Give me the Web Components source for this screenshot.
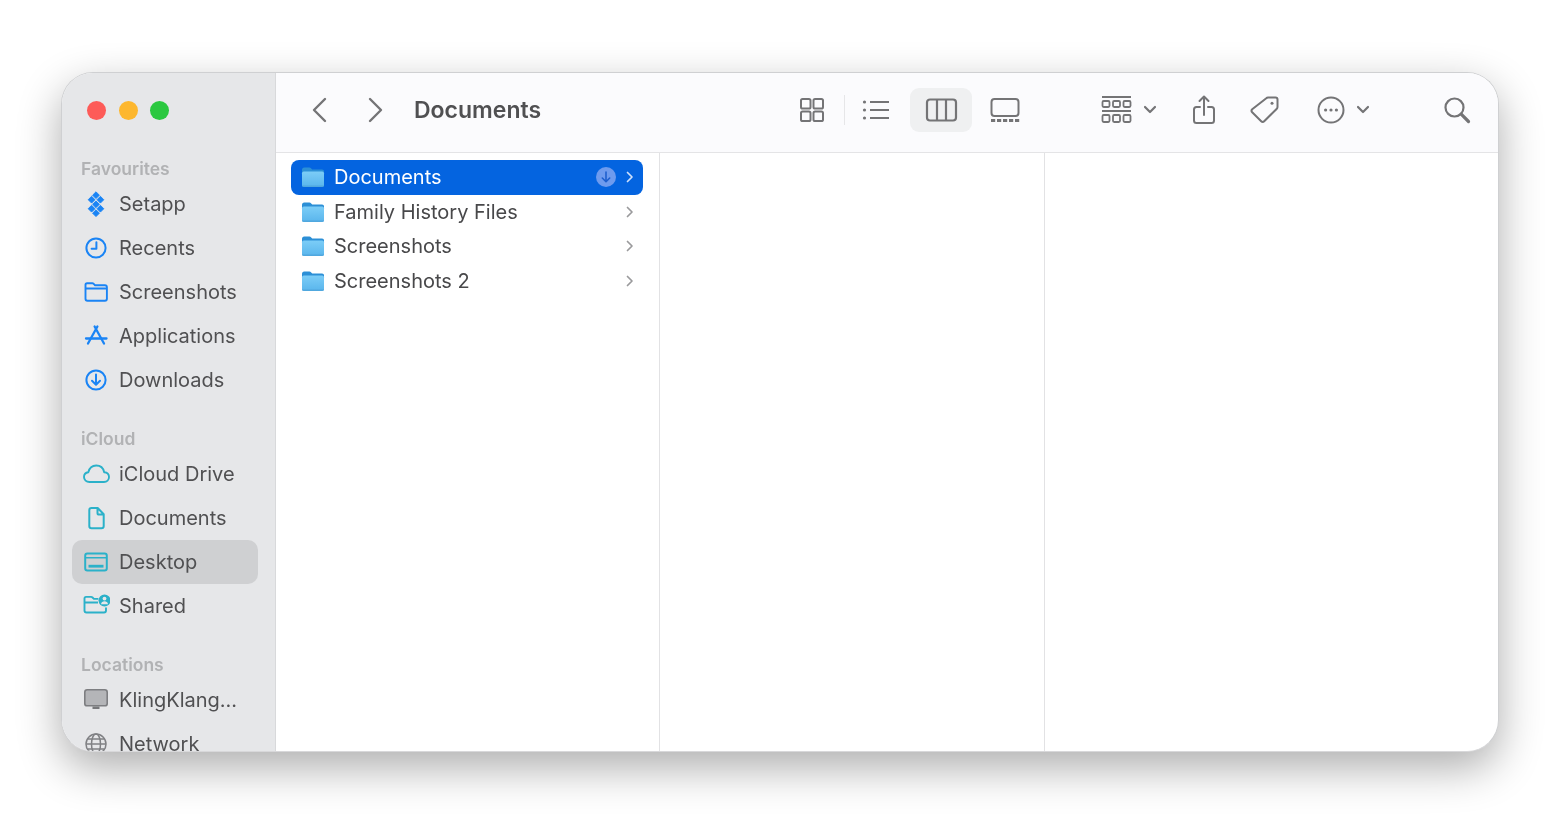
<!DOCTYPE html>
<html>
<head>
<meta charset="utf-8">
<title>Documents</title>
<style>
  html, body { margin: 0; background: #fff; }
  body { padding: 72px 61px 0; min-height: 832px; box-sizing: border-box; font-family: Inter, "Liberation Sans", sans-serif; }
</style>
</head>
<body>
<finder-window>
  <side-bar slot="side">
    <side-group label="Favourites">
      <side-item icon="setapp">Setapp</side-item>
      <side-item icon="clock">Recents</side-item>
      <side-item icon="folder">Screenshots</side-item>
      <side-item icon="apps">Applications</side-item>
      <side-item icon="download">Downloads</side-item>
    </side-group>
    <side-group label="iCloud" color="#2bb1c9">
      <side-item icon="cloud">iCloud Drive</side-item>
      <side-item icon="doc">Documents</side-item>
      <side-item icon="desktop" selected>Desktop</side-item>
      <side-item icon="shared">Shared</side-item>
    </side-group>
    <side-group label="Locations" color="#808184">
      <side-item icon="monitor">KlingKlang...</side-item>
      <side-item icon="globe">Network</side-item>
    </side-group>
  </side-bar>
  <tool-bar slot="top" title="Documents"></tool-bar>
  <file-column slot="col" style="width:384px">
    <file-row selected cloud>Documents</file-row>
    <file-row>Family History Files</file-row>
    <file-row>Screenshots</file-row>
    <file-row>Screenshots 2</file-row>
  </file-column>
  <file-column slot="col" style="width:385px"></file-column>
  <file-column slot="col" style="flex:1;border-right:0"></file-column>
</finder-window>

<script>
const ICONS = {
  setapp: `<g fill="currentColor" stroke="currentColor" stroke-width=".9" stroke-linejoin="round"><path d="M14 1.800l3.400 3.400-3.400 3.400-3.400-3.400z"/><path d="M9.600 6.300l3.400 3.400-3.400 3.400-3.400-3.400z"/><path d="M18.400 6.300l3.400 3.400-3.400 3.400-3.400-3.400z"/><path d="M14 10.900l3.400 3.400-3.400 3.400-3.400-3.400z"/><path d="M9.600 15.300l3.400 3.400-3.400 3.400-3.400-3.400z"/><path d="M18.400 15.300l3.400 3.400-3.400 3.400-3.400-3.400z"/><path d="M14 19.800l3.400 3.400-3.400 3.400-3.400-3.400z"/></g>`,
  clock: `<g fill="none" stroke="currentColor" stroke-width="2" stroke-linecap="round" stroke-linejoin="round"><circle cx="14" cy="14" r="9.600"/><path d="M14.400 8.200v6.600H9.600"/></g>`,
  folder: `<path d="M3.500 9V6.800c0-1 .7-1.600 1.600-1.600h5.200c.6 0 1 .2 1.400.6l1.400 1.500h9.800c1.200 0 2 .8 2 2v11.500c0 1.200-.8 2-2 2H5.500c-1.200 0-2-.8-2-2zM3.500 10.500h21" fill="none" stroke="currentColor" stroke-width="1.900" stroke-linejoin="round"/>`,
  apps: `<g fill="none" stroke="currentColor" stroke-width="2.300" stroke-linecap="round"><path d="M12.600 4.500L22 21.500M15.400 4.500L6 21.500"/><path d="M4 16.500h20.500"/></g>`,
  download: `<g fill="none" stroke="currentColor" stroke-width="2" stroke-linecap="round" stroke-linejoin="round"><circle cx="14" cy="14" r="9.600"/><path d="M14 8.500v10M10 14.800l4 4 4-4"/></g>`,
  cloud: `<path d="M7.500 22C4.300 22 2 19.900 2 17c0-2.600 1.900-4.400 4.300-4.700C7.300 8.300 10.400 5.500 14.200 5.500c4.400 0 7.200 3 8 6.700 2.700.2 4.800 2 4.800 4.800 0 2.900-2.200 5-5 5z" fill="none" stroke="currentColor" stroke-width="1.900" stroke-linejoin="round"/>`,
  doc: `<path d="M9.500 4h6.200l6 6.200V22c0 1.400-.8 2.200-2.200 2.200H9.500C8.100 24.200 7.300 23.400 7.300 22V6.200C7.300 4.800 8.100 4 9.500 4zM15.500 4v5c0 1 .6 1.600 1.600 1.600h4.600" fill="none" stroke="currentColor" stroke-width="2" stroke-linejoin="round"/>`,
  desktop: `<g fill="none" stroke="currentColor" stroke-width="2"><rect x="3.200" y="5.500" width="21.600" height="17" rx="2.200"/><path d="M3.200 9.800h21.600" stroke-width="1.400"/></g><rect x="6.500" y="16.800" width="15" height="2.800" fill="currentColor"/>`,
  shared: `<path d="M22 20.500H4.500c-1.200 0-2-.8-2-2V6.500c0-1 .7-1.600 1.600-1.600h5c.6 0 1 .2 1.400.6l1.400 1.400h4.500M2.500 10.500h13.500M24 15.500v3c0 1.200-.8 2-2 2" fill="none" stroke="currentColor" stroke-width="1.900" stroke-linejoin="round"/><circle cx="22.500" cy="8.500" r="6" fill="currentColor"/><circle cx="22.500" cy="6.600" r="1.900" fill="#e6e7e9"/><path d="M19 12.200c.3-2 1.800-2.900 3.500-2.900s3.200.9 3.500 2.900z" fill="#e6e7e9"/>`,
  monitor: `<rect x="2.800" y="3.800" width="22.400" height="16" rx="2.400" fill="#b4b5b8" stroke="#7d7e81" stroke-width="1.600"/><path d="M10.500 20.500h7v2.500h-7z" fill="#77787b"/>`,
  globe: `<g fill="none" stroke="currentColor" stroke-width="1.500"><circle cx="14" cy="14" r="10"/><ellipse cx="14" cy="14" rx="4.500" ry="10"/><path d="M5.500 9h17M4 14h20M5.500 19h17"/></g>`
};

const TOOLS = {
  grid: `<g fill="none" stroke="currentColor" stroke-width="2"><rect x="3" y="3" width="9.500" height="9.500" rx="1.600"/><rect x="15.500" y="3" width="9.500" height="9.500" rx="1.600"/><rect x="3" y="15.500" width="9.500" height="9.500" rx="1.600"/><rect x="15.500" y="15.500" width="9.500" height="9.500" rx="1.600"/></g>`,
  list: `<g fill="currentColor"><circle cx="2.500" cy="6" r="1.600"/><circle cx="2.500" cy="14" r="1.600"/><circle cx="2.500" cy="22" r="1.600"/></g><path d="M8 6h19M8 14h19M8 22h19" stroke="currentColor" stroke-width="2"/>`,
  columns: `<rect x="1" y="3.500" width="29" height="21" rx="3" fill="none" stroke="currentColor" stroke-width="2.200"/><path d="M11 3.500v21M20 3.500v21" stroke="currentColor" stroke-width="2.200"/>`,
  gallery: `<rect x="1.500" y="3" width="27" height="17" rx="3" fill="none" stroke="currentColor" stroke-width="2"/><g fill="currentColor"><rect x="1" y="23" width="4.200" height="3"/><rect x="7" y="23" width="4.200" height="3"/><rect x="13" y="23" width="4.200" height="3"/><rect x="19" y="23" width="4.200" height="3"/><rect x="25" y="23" width="4.200" height="3"/></g>`,
  group: `<g fill="none" stroke="currentColor"><path d="M1 1h29M1 15h29" stroke-width="1.900"/><g stroke-width="1.800"><rect x="1.500" y="5" width="7" height="6" rx="1.200"/><rect x="12" y="5" width="7" height="6" rx="1.200"/><rect x="22.500" y="5" width="7" height="6" rx="1.200"/><rect x="1.500" y="19" width="7" height="7" rx="1.200"/><rect x="12" y="19" width="7" height="7" rx="1.200"/><rect x="22.500" y="19" width="7" height="7" rx="1.200"/></g></g>`,
  chev: `<path d="M2 3l5 5 5-5" fill="none" stroke="currentColor" stroke-width="2.200" stroke-linecap="round" stroke-linejoin="round"/>`,
  share: `<g fill="none" stroke="currentColor" stroke-width="2" stroke-linecap="round" stroke-linejoin="round"><path d="M8 12H4.500C3 12 2 13 2 14.500v11C2 27 3 28 4.500 28h15c1.500 0 2.500-1 2.500-2.500v-11C22 13 21 12 19.500 12H16"/><path d="M12 20V1.500M7.500 6L12 1.500 16.500 6"/></g>`,
  tag: `<g fill="none" stroke="currentColor" stroke-width="2" stroke-linejoin="round"><path d="M18 2.500h7.500c1.200 0 2 .8 2 2V12c0 .7-.2 1.200-.7 1.700L14.200 26.300c-1 1-2 1-3 0L2.200 17.300c-1-1-1-2 0-3L16.300 3.200c.5-.5 1-.7 1.700-.7z"/></g><circle cx="22" cy="8.300" r="1.500" fill="currentColor"/>`,
  more: `<circle cx="14" cy="14" r="12.500" fill="none" stroke="currentColor" stroke-width="2"/><g fill="currentColor"><circle cx="8.600" cy="14" r="1.600"/><circle cx="14" cy="14" r="1.600"/><circle cx="19.400" cy="14" r="1.600"/></g>`,
  search: `<g fill="none" stroke="currentColor" stroke-linecap="round"><circle cx="11.500" cy="11.500" r="9" stroke-width="2.200"/><path d="M18.200 18.200L25.500 25.500" stroke-width="3.200"/></g>`,
  back: `<path d="M14 2L3 13l11 11" fill="none" stroke="currentColor" stroke-width="2.400" stroke-linecap="round" stroke-linejoin="round"/>`,
  forward: `<path d="M3 2l11 11L3 24" fill="none" stroke="currentColor" stroke-width="2.400" stroke-linecap="round" stroke-linejoin="round"/>`
};

class FinderWindow extends HTMLElement {
  constructor() {
    super();
    this.attachShadow({ mode: "open" }).innerHTML = `
    <style>
      :host {
        display: grid;
        grid-template-columns: 214px 1fr;
        width: 1438px;
        height: 680px;
        box-sizing: border-box;
        border-radius: 32px;
        overflow: hidden;
        background: #fff;
        border: 1px solid #cfd0d2;
        border-bottom-color: #d8d8da;
        box-shadow: 0 16px 44px rgba(0, 0, 0, .32);
        filter: blur(.35px);
      }
      .main { display: flex; flex-direction: column; min-width: 0; height: 678px; }
      .cols { display: flex; flex: 1; min-height: 0; }
    </style>
    <slot name="side"></slot>
    <div class="main">
      <slot name="top"></slot>
      <div class="cols"><slot name="col"></slot></div>
    </div>`;
  }
}

class SideBar extends HTMLElement {
  constructor() {
    super();
    this.attachShadow({ mode: "open" }).innerHTML = `
    <style>
      :host {
        display: block;
        height: 678px;
        overflow: hidden;
        background: #e6e7e9;
        border-right: 1px solid #d8d9db;
        box-sizing: border-box;
      }
      .lights { display: flex; gap: 12.500px; height: 75px; align-items: center; padding-left: 25px; }
      .lights i { width: 19px; height: 19px; border-radius: 50%; }
      .groups { display: flex; flex-direction: column; gap: 22px; padding-top: 6px; }
    </style>
    <div class="lights">
      <i style="background:#fd5b58"></i>
      <i style="background:#fdb72e"></i>
      <i style="background:#2bc840"></i>
    </div>
    <div class="groups"><slot></slot></div>`;
  }
}

class SideGroup extends HTMLElement {
  constructor() {
    super();
    this.attachShadow({ mode: "open" }).innerHTML = `
    <style>
      :host { display: block; color: #1a84f5; }
      .label {
        height: 28px;
        line-height: 30px;
        padding-left: 19px;
        font-size: 17.500px;
        font-weight: 600;
        color: #b1b2b4;
      }
    </style>
    <div class="label"></div>
    <slot></slot>`;
  }

  connectedCallback() {
    this.shadowRoot.querySelector(".label").textContent = this.getAttribute("label");
    if (this.hasAttribute("color")) this.style.color = this.getAttribute("color");
  }
}

class SideItem extends HTMLElement {
  constructor() {
    super();
    this.attachShadow({ mode: "open" }).innerHTML = `
    <style>
      :host {
        display: flex;
        align-items: center;
        gap: 9px;
        height: 44px;
        width: 186px;
        margin-left: 10px;
        padding-left: 10px;
        box-sizing: border-box;
        border-radius: 10px;
      }
      :host([selected]) { background: #cfd0d2; }
      svg { width: 28px; height: 28px; flex: none; }
      span { font-size: 20px; color: #505052; white-space: nowrap; }
    </style>
    <svg viewBox="0 0 28 28"></svg>
    <span><slot></slot></span>`;
  }

  connectedCallback() {
    this.shadowRoot.querySelector("svg").innerHTML = ICONS[this.getAttribute("icon")];
  }
}

class ToolIcon extends HTMLElement {
  constructor() {
    super();
    this.attachShadow({ mode: "open" }).innerHTML = `
    <style>
      :host { display: block; flex: none; line-height: 0; }
      svg { display: block; overflow: visible; }
    </style>
    <svg></svg>`;
  }

  connectedCallback() {
    const w = this.getAttribute("w");
    const h = this.getAttribute("h");
    const svg = this.shadowRoot.querySelector("svg");
    svg.setAttribute("width", w);
    svg.setAttribute("height", h);
    svg.setAttribute("viewBox", this.getAttribute("box") || `0 0 ${w} ${h}`);
    svg.innerHTML = TOOLS[this.getAttribute("name")];
  }
}

class ToolBar extends HTMLElement {
  constructor() {
    super();
    this.attachShadow({ mode: "open" }).innerHTML = `
    <style>
      :host {
        display: flex;
        align-items: center;
        height: 80px;
        flex: none;
        box-sizing: border-box;
        padding-bottom: 6px;
        background: #fbfbfd;
        border-bottom: 1px solid #e4e4e6;
        color: #747476;
      }
      h1 {
        margin: 0 0 0 30px;
        font-size: 23px;
        font-weight: 600;
        color: #505052;
        white-space: nowrap;
      }
      .sep { width: 1px; height: 30px; background: #e6e6e8; flex: none; }
      .active { display: flex; align-items: center; justify-content: center; width: 62px; height: 44px; border-radius: 9px; background: #eff0f1; flex: none; }
    </style>
    <tool-icon name="back" w="17" h="26" style="margin-left:35px"></tool-icon>
    <tool-icon name="forward" w="17" h="26" style="margin-left:39px"></tool-icon>
    <h1></h1>
    <tool-icon name="grid" w="28" h="28" style="margin-left:auto"></tool-icon>
    <div class="sep" style="margin-left:18px"></div>
    <tool-icon name="list" w="28" h="28" style="margin-left:17px"></tool-icon>
    <div class="active" style="margin-left:20px"><tool-icon name="columns" w="31" h="28"></tool-icon></div>
    <tool-icon name="gallery" w="30" h="28" style="margin-left:18px"></tool-icon>
    <tool-icon name="group" w="31" h="28" style="margin-left:81px"></tool-icon>
    <tool-icon name="chev" w="14" h="11" style="margin-left:11px"></tool-icon>
    <tool-icon name="share" w="24" h="30" style="margin-left:35px"></tool-icon>
    <tool-icon name="tag" w="30" h="30" style="margin-left:34px"></tool-icon>
    <tool-icon name="more" w="28" h="28" style="margin-left:37px"></tool-icon>
    <tool-icon name="chev" w="14" h="11" style="margin-left:11px"></tool-icon>
    <tool-icon name="search" w="28" h="28" style="margin-left:73px;margin-right:27px"></tool-icon>`;
  }

  connectedCallback() {
    this.shadowRoot.querySelector("h1").textContent = this.getAttribute("title");
  }
}

class FileColumn extends HTMLElement {
  constructor() {
    super();
    this.attachShadow({ mode: "open" }).innerHTML = `
    <style>
      :host {
        display: block;
        box-sizing: border-box;
        flex: none;
        padding: 7.200px 16px 0 15px;
        border-right: 1px solid #e2e2e4;
      }
    </style>
    <slot></slot>`;
  }
}

class FileRow extends HTMLElement {
  constructor() {
    super();
    this.attachShadow({ mode: "open" }).innerHTML = `
    <style>
      :host {
        display: flex;
        align-items: center;
        height: 34.500px;
        box-sizing: border-box;
        padding: 0 9px 0 10px;
        border-radius: 8px;
        color: #48484a;
        font-size: 20px;
      }
      :host([selected]) { background: #0464e0; color: #fff; }
      .folder { width: 24px; height: 22px; flex: none; margin-right: 9px; }
      .name { flex: 1; white-space: nowrap; }
      .chev { width: 9px; height: 12px; flex: none; color: #9a9a9c; }
      :host([selected]) .chev { color: #cfe0fa; }
      .cloud { display: none; width: 20px; height: 20px; flex: none; margin-right: 9px; }
      :host([cloud]) .cloud { display: block; }
    </style>
    <svg class="folder" viewBox="0 0 24 22">
      <defs><linearGradient id="f" x1="0" y1="0" x2="0" y2="1"><stop offset="0" stop-color="#7ccdf7"/><stop offset="1" stop-color="#59b5ec"/></linearGradient></defs>
      <path d="M1 4c0-1.500.8-2.500 2.300-2.500h5c.9 0 1.400.3 1.900.9l1 1.100H21c1.300 0 2 .8 2 2V8H1z" fill="#2c8fd6"/>
      <rect x="1" y="5.500" width="22" height="15.500" rx="1.800" fill="url(#f)"/>
      <path d="M2.800 21h18.400c1 0 1.800-.7 1.800-1.600H1c0 .9.800 1.600 1.800 1.600z" fill="#4a9ed6" opacity=".6"/>
    </svg>
    <span class="name"><slot></slot></span>
    <svg class="cloud" viewBox="0 0 20 20">
      <circle cx="10" cy="10" r="10" fill="#6e9bee"/>
      <path d="M10 5v9.500M6.300 11l3.700 3.700 3.700-3.700" fill="none" stroke="#1e5fce" stroke-width="1.600" stroke-linecap="round" stroke-linejoin="round"/>
    </svg>
    <svg class="chev" viewBox="0 0 9 12"><path d="M2.500 1.500L7 6l-4.500 4.500" fill="none" stroke="currentColor" stroke-width="1.700" stroke-linecap="round" stroke-linejoin="round"/></svg>`;
  }
}

customElements.define("finder-window", FinderWindow);
customElements.define("side-bar", SideBar);
customElements.define("side-group", SideGroup);
customElements.define("side-item", SideItem);
customElements.define("tool-icon", ToolIcon);
customElements.define("tool-bar", ToolBar);
customElements.define("file-column", FileColumn);
customElements.define("file-row", FileRow);
</script>
</body>
</html>
